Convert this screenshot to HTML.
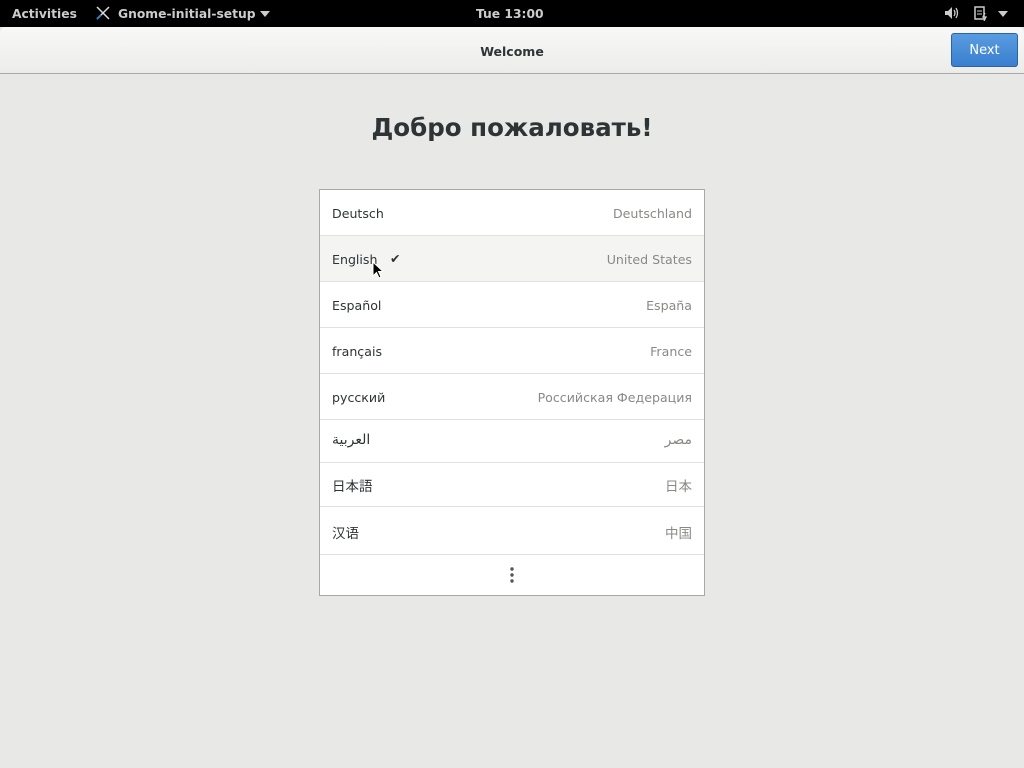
<!DOCTYPE html>
<html><head><meta charset="utf-8"><style>
*{margin:0;padding:0;box-sizing:border-box}
body{width:1024px;height:768px;background:#e8e8e7;font-family:"DejaVu Sans","Liberation Sans","Noto Sans CJK JP",sans-serif;position:relative;overflow:hidden}
#top{position:absolute;left:0;top:0;width:1024px;height:27px;background:#000;color:#ccc;font-size:12.3px;font-weight:bold}
#top span{position:absolute;top:7px}
#hdr{position:absolute;left:0;top:27px;width:1024px;height:47px;background:linear-gradient(#f8f8f7,#ececea);border-bottom:1px solid #a8a8a6;border-radius:6px 6px 0 0}
#hdr .t{position:absolute;left:0;width:1024px;text-align:center;top:17px;font-size:12.5px;font-weight:bold;color:#2e3436}
#next{position:absolute;left:951px;top:6px;width:67px;height:34px;background:linear-gradient(#5a9ce0,#3a7fcf);border:1px solid #2a63a8;border-radius:3px;color:#fff;font-size:13px;text-align:center;line-height:34px}
h1{position:absolute;left:0;width:1024px;top:113px;text-align:center;font-size:24.5px;font-weight:bold;color:#2e3436}
#list{position:absolute;left:319px;top:189px;width:386px;height:407px;background:#fff;border:1px solid #a8a8a6}
.r{position:absolute;left:0;width:384px;border-bottom:1px solid #e0e0de;font-size:12.6px;color:#2e3436}
.r .a{position:absolute;left:12px}
.r .b{position:absolute;right:12px;color:#888a85}
</style></head><body>
<div id="top">
<span style="left:12px">Activities</span>
<svg style="position:absolute;left:96px;top:6px" width="14" height="14"><path d="M1 1L13 13M13 1L1 13" stroke="#ddd" stroke-width="1.5"/><path d="M1 13L5 9" stroke="#3d7bc4" stroke-width="2"/></svg>
<span style="left:118px">Gnome-initial-setup</span>
<svg style="position:absolute;left:260px;top:11px" width="10" height="6"><path d="M0 0H10L5 6Z" fill="#ccc"/></svg>
<span style="left:476px">Tue 13:00</span>
<svg style="position:absolute;left:944px;top:6px" width="16" height="14"><path d="M1 5H4L8 1V13L4 9H1Z" fill="#ccc"/><path d="M10 4Q12 7 10 10M12 2Q15 7 12 12" stroke="#ccc" fill="none" stroke-width="1.3"/></svg>
<svg style="position:absolute;left:973px;top:5px" width="16" height="16"><rect x="2" y="2" width="9" height="12" fill="none" stroke="#ccc" stroke-width="1.5"/><path d="M4 6H9M4 9H9" stroke="#ccc"/><path d="M12 8L10 12H13L11 16" stroke="#ccc" fill="none" stroke-width="1.3"/></svg>
<svg style="position:absolute;left:998px;top:11px" width="10" height="6"><path d="M0 0H10L5 6Z" fill="#ccc"/></svg>
</div>
<div id="hdr"><div class="t">Welcome</div><div id="next">Next</div></div>
<h1>Добро пожаловать!</h1>
<div id="list">
<div class="r" style="top:0;height:46px"><span class="a" style="top:16px">Deutsch</span><span class="b" style="top:16px">Deutschland</span></div>
<div class="r" style="top:46px;height:46px;background:#f4f4f3"><span class="a" style="top:16px">English</span><span style="position:absolute;left:70px;top:15px">✔</span><span class="b" style="top:16px">United States</span></div>
<div class="r" style="top:92px;height:46px"><span class="a" style="top:16px">Español</span><span class="b" style="top:16px">España</span></div>
<div class="r" style="top:138px;height:46px"><span class="a" style="top:16px">français</span><span class="b" style="top:16px">France</span></div>
<div class="r" style="top:184px;height:46px"><span class="a" style="top:16px">русский</span><span class="b" style="top:16px">Российская Федерация</span></div>
<div class="r" style="top:230px;height:43px"><span class="a" style="top:12px;font-size:14px">العربية</span><span class="b" style="top:12px;font-size:14px">مصر</span></div>
<div class="r" style="top:273px;height:44px"><span class="a" style="top:12px;font-size:13.5px">日本語</span><span class="b" style="top:12px;font-size:13.5px">日本</span></div>
<div class="r" style="top:317px;height:48px"><span class="a" style="top:15px;font-size:13.5px">汉语</span><span class="b" style="top:15px;font-size:13.5px">中国</span></div>
<svg style="position:absolute;left:189px;top:377px" width="6" height="16"><circle cx="3" cy="2" r="1.7" fill="#555"/><circle cx="3" cy="8" r="1.7" fill="#555"/><circle cx="3" cy="14" r="1.7" fill="#555"/></svg>
</div>
<svg style="position:absolute;left:372px;top:261px" width="12" height="18"><path d="M1 1V15L4.5 11.5L7 17L9 16L6.5 10.5H11Z" fill="#000" stroke="#fff" stroke-width="1"/></svg>
</body></html>
